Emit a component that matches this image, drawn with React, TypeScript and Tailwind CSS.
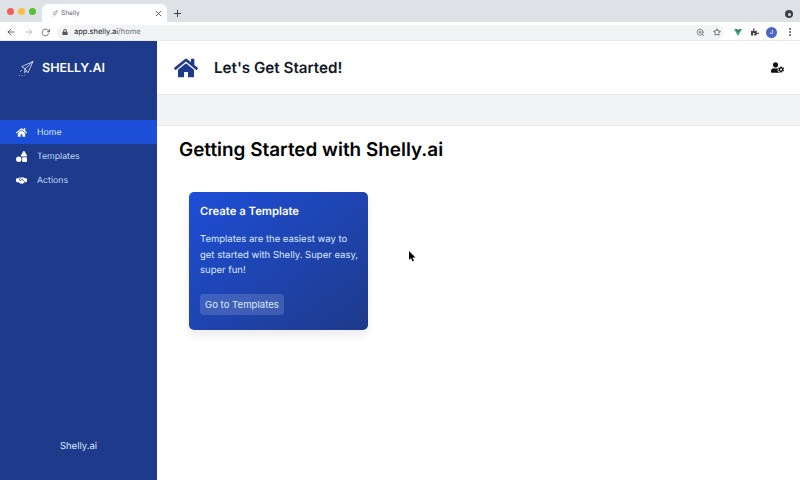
import { FaHome, FaShapes, FaUserCog, FaLock, FaRegStar, FaPuzzlePiece } from "react-icons/fa";
import { FaHandshakeSimple } from "react-icons/fa6";
import { FiArrowLeft, FiArrowRight, FiRotateCw, FiX, FiPlus, FiZoomIn } from "react-icons/fi";

function Plane({ className }: { className: string }) {
  return (
    <svg viewBox="0 0 18 17" className={className} fill="none" stroke="currentColor">
      <path d="M17 1 5 6.500 8.500 9 17 1 11.500 13 8.500 9 8 13 10 11" strokeWidth="0.9" strokeLinejoin="round" />
      <path d="M5 10 3.500 12M2 16h1M5 16h1M8 15.500h1" strokeWidth="0.8" />
    </svg>
  );
}

function NavItem({ icon, label, active }: { icon: React.ReactNode; label: string; active?: boolean }) {
  return (
    <div className={`flex items-center h-6 pl-[16px] text-[8.75px] ${active ? "bg-[#1d4ed8] text-[#dbeafe]" : "text-[#bfdbfe]"}`}>
      <span className="w-[21px] text-white text-[11px] flex items-center">{icon}</span>
      <span className="pt-[4px]">{label}</span>
    </div>
  );
}

export default function App() {
  return (
    <div className="w-[800px] h-[480px] overflow-hidden flex flex-col bg-white font-['Inter',sans-serif] [text-rendering:geometricPrecision]">
      <div className="h-[22px] bg-[#dee1e6] flex items-end shrink-0 relative">
        <div className="flex items-center gap-[4px] pl-[7px] h-full">
          <span className="w-[7px] h-[7px] rounded-full bg-[#f25f58]" />
          <span className="w-[7px] h-[7px] rounded-full bg-[#fbbe3c]" />
          <span className="w-[7px] h-[7px] rounded-full bg-[#57c038]" />
        </div>
        <div className="ml-[6px] w-[125px] h-[18px] bg-white rounded-t-[6px] flex items-center pl-[9px] pr-[4px] text-[6.5px] text-[#5f6368]">
          <Plane className="w-[7px] h-[7px] mr-[3px] text-[#555]" />
          <span className="pt-[2px]">Shelly</span>
          <FiX className="ml-auto text-[9px] text-[#333]" />
        </div>
        <FiPlus className="ml-[5px] mb-[3px] text-[11px] text-[#333]" />
        <span className="ml-auto mr-[7px] mb-[4px] w-[8px] h-[8px] rounded-full bg-[#3c4043] flex items-center justify-center">
          <span className="w-[3px] h-[3px] rounded-full bg-[#dee1e6]" />
        </span>
      </div>
      <div className="h-[19px] pt-[2px] bg-white flex items-center shrink-0 border-b border-[#e5e7eb]">
        <div className="flex items-center gap-[8px] pl-[6px] text-[10px]">
          <FiArrowLeft className="text-[#444]" />
          <FiArrowRight className="text-[#b3b3b3]" />
          <FiRotateCw className="text-[9px] -ml-[1px] text-[#444]" />
        </div>
        <div className="ml-[7px] w-[667px] h-[15px] rounded-full bg-[#f1f3f4] flex items-center pl-[5px] pr-[3px]">
          <FaLock className="text-[6px] text-[#555] mr-[6px]" />
          <span className="text-[7.5px] text-[#202124]">app.shelly.ai<span className="text-[#70757a]">/home</span></span>
          <FiZoomIn className="ml-auto text-[9px] text-[#666]" />
          <FaRegStar className="ml-[8px] text-[8px] text-[#555]" />
        </div>
        <div className="flex items-center pl-[10px] gap-[9px]">
          <svg viewBox="0 0 24 21" className="w-[8px] h-[7px]">
            <path d="M0 0h5l7 12L19 0h5L12 21z" fill="#2fa77a" />
            <path d="M5 0h4l3 5 3-5h4l-7 12z" fill="#34495e" />
          </svg>
          <FaPuzzlePiece className="text-[8px] text-[#444]" />
        </div>
        <span className="ml-[7px] w-[11px] h-[11px] rounded-full bg-[#4a67c4] text-white text-[6px] flex items-center justify-center">J</span>
        <span className="ml-[12px] flex flex-col gap-[1px]">
          <span className="w-[2px] h-[2px] rounded-full bg-[#555]" />
          <span className="w-[2px] h-[2px] rounded-full bg-[#555]" />
          <span className="w-[2px] h-[2px] rounded-full bg-[#555]" />
        </span>
      </div>
      <div className="flex-1 flex min-h-0">
        <aside className="w-[157px] bg-[#1e3a8a] flex flex-col shrink-0">
          <div className="h-[79px] pt-[18px] pl-[17px] flex items-start gap-[8px]">
            <Plane className="w-[17px] h-[17px] text-[#dbe3f5] mt-[1px]" />
            <span className="text-[12.5px] font-semibold text-white leading-[20px]">SHELLY.AI</span>
          </div>
          <NavItem active icon={<FaHome />} label="Home" />
          <NavItem icon={<FaShapes />} label="Templates" />
          <NavItem icon={<FaHandshakeSimple />} label="Actions" />
          <div className="mt-auto pb-[26px] text-center text-[9.5px] text-[#dbeafe]">Shelly.ai</div>
        </aside>
        <main className="flex-1 min-w-0 flex flex-col">
          <header className="h-[54px] shrink-0 flex items-center pl-[17px] pr-[16px] border-b border-[#e5e7eb]">
            <FaHome className="text-[24px] text-[#1e3a8a]" />
            <h1 className="ml-[16px] pt-[2px] text-[15.2px] font-semibold text-[#111827]">Let's Get Started!</h1>
            <FaUserCog className="ml-auto text-[13px] text-[#111]" />
          </header>
          <div className="h-[31px] shrink-0 bg-[#f3f4f6] border-b border-[#e5e7eb]" />
          <div className="pl-[22px] pt-[12px]">
            <h2 className="text-[18.9px] leading-[24px] font-semibold text-black">Getting Started with Shelly.ai</h2>
            <div className="mt-[30px] ml-[10px] w-[179px] h-[138px] rounded-[5px] bg-gradient-to-br from-[#1d4ed8] to-[#1e3a8a] shadow-[0_6px_10px_rgba(0,0,0,0.08)] pt-[11px] pl-[11px] pr-[8px]">
              <h3 className="text-[11.3px] leading-[16px] font-semibold text-white">Create a Template</h3>
              <p className="mt-[13px] text-[9.5px] leading-[15.7px] text-[#dbeafe]">Templates are the easiest way to get started with Shelly. Super easy, super fun!</p>
              <button className="mt-[15px] h-[21px] pt-[1px] px-[5px] rounded-[4px] bg-white/15 text-[9.6px] text-[#dbeafe]">Go to Templates</button>
            </div>
          </div>
        </main>
      </div>
      <svg className="absolute left-[409px] top-[251px] w-[7px] h-[11px]" viewBox="0 0 7 11">
        <path d="M0 0v9l2-2 1.500 3.500 1.500-.7L3.500 6.500H6.500z" fill="#000" />
      </svg>
    </div>
  );
}
